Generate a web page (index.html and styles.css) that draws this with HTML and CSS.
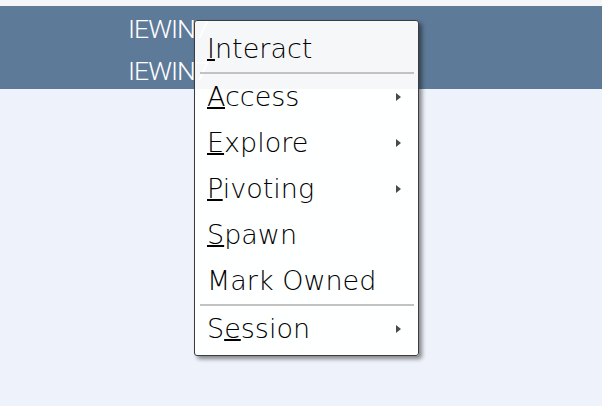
FILE: index.html
```html
<!DOCTYPE html>
<html>
<head>
<meta charset="utf-8">
<link rel="stylesheet" href="styles.css">
</head>
<body>
<div class="page">
  <div class="topstrip"></div>
  <div class="band">
    <div class="host">IEWIN7</div>
    <div class="host">IEWIN7</div>
  </div>
  <div class="rest"></div>

  <div class="menu">
    <div class="item"><span class="label"><u>I</u>nteract</span></div>
    <div class="sep"></div>
    <div class="item"><span class="label"><u>A</u>ccess</span><span class="arrow"></span></div>
    <div class="item"><span class="label"><u>E</u>xplore</span><span class="arrow"></span></div>
    <div class="item"><span class="label"><u>P</u>ivoting</span><span class="arrow"></span></div>
    <div class="item"><span class="label"><u>S</u>pawn</span></div>
    <div class="item"><span class="label">Mark Owned</span></div>
    <div class="sep"></div>
    <div class="item"><span class="label">S<u>e</u>ssion</span><span class="arrow"></span></div>
  </div>
</div>
</body>
</html>
```

FILE: styles.css
```css
html, body {
  margin: 0;
  padding: 0;
}
body {
  background: #eef2fa;
  width: 602px;
  height: 406px;
  overflow: hidden;
}
.page {
  position: relative;
  width: 602px;
  height: 406px;
}
.topstrip {
  height: 6px;
  background: #f3f5f8;
}
.band {
  height: 83px;
  background: #5e7a99;
  padding-left: 128px;
  padding-top: 8px;
  box-sizing: border-box;
  display: flex;
  flex-direction: column;
  gap: 13px;
}
.host {
  font-family: Roboto, "Liberation Sans", sans-serif;
  font-weight: 300;
  font-size: 26.5px;
  letter-spacing: -1px;
  line-height: 29px;
  color: #ffffff;
}
.rest {
  height: 317px;
}
.menu {
  position: absolute;
  left: 194px;
  top: 20px;
  width: 225px;
  height: 336px;
  box-sizing: border-box;
  border: 1px solid #3c3c3c;
  border-radius: 3px;
  background: rgba(255, 255, 255, 0.94);
  box-shadow: 3px 3px 4px rgba(0, 0, 0, 0.45);
  padding: 5px 0 0 0;
  display: flex;
  flex-direction: column;
}
.item {
  height: 46px;
  display: flex;
  align-items: center;
  justify-content: space-between;
  padding: 0 17px 0 12px;
}
.label {
  font-family: "DejaVu Sans", sans-serif;
  font-weight: 200;
  font-size: 27px;
  line-height: 46px;
  color: #000;
  white-space: nowrap;
}
.label u {
  text-decoration-thickness: 2px;
  text-underline-offset: 1px;
}
.arrow {
  width: 0;
  height: 0;
  border-top: 4.5px solid transparent;
  border-bottom: 4.5px solid transparent;
  border-left: 5px solid #4a4a4a;
}
.sep {
  height: 2px;
  margin: 0 4px 0 5px;
  background: #c2c2c2;
}
```
